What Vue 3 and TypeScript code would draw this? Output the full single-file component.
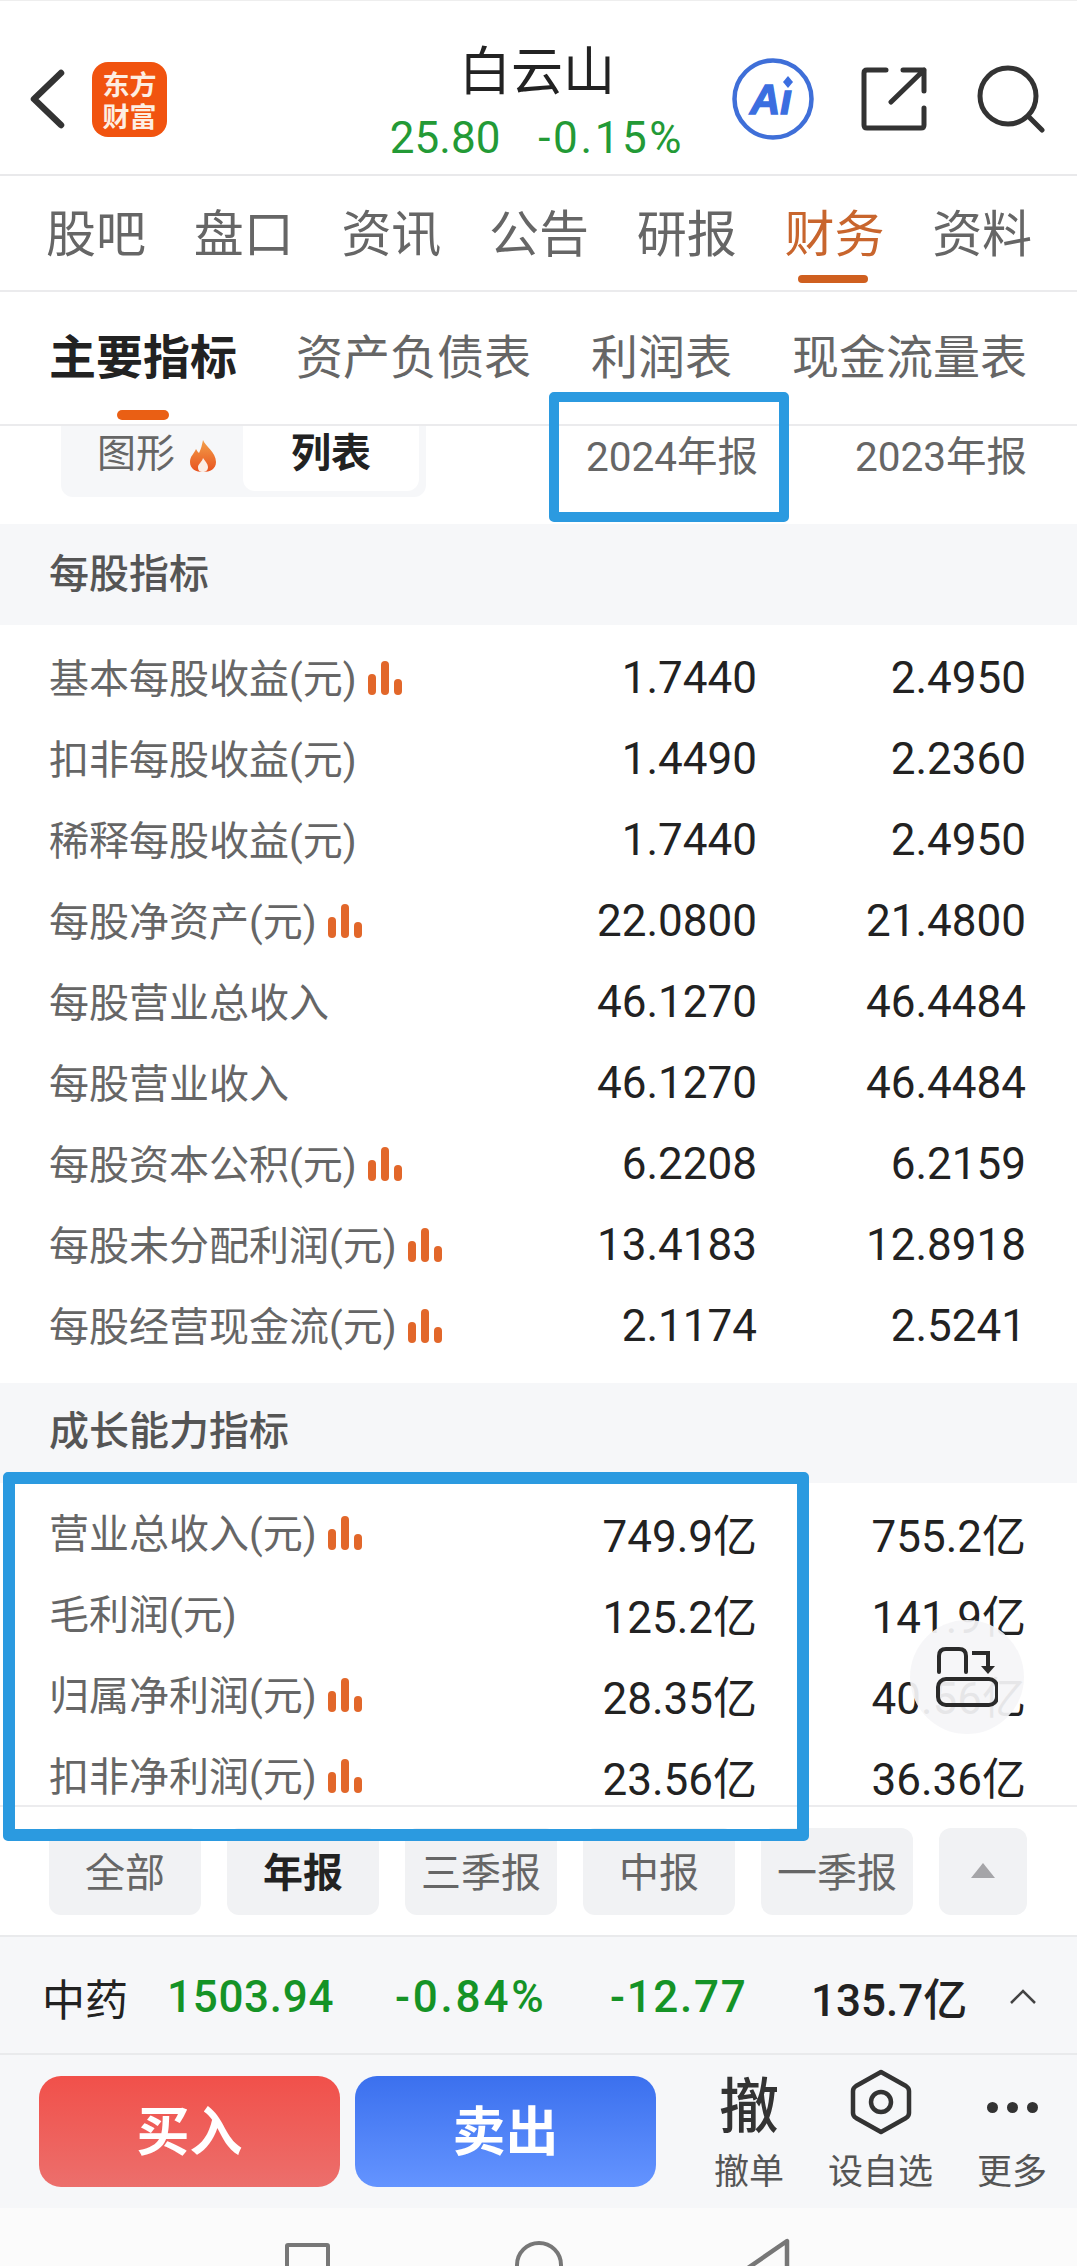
<script setup lang="ts">
const mainTabs = ['股吧', '盘口', '资讯', '公告', '研报', '财务', '资料'];
const subTabs = ['主要指标', '资产负债表', '利润表', '现金流量表'];
const filters = ['全部', '年报', '三季报', '中报', '一季报'];

interface Row {
  label: string;
  a: string;
  b: string;
  bars?: boolean;
}

const perShare: Row[] = [
  { label: '基本每股收益(元)', a: '1.7440', b: '2.4950', bars: true },
  { label: '扣非每股收益(元)', a: '1.4490', b: '2.2360' },
  { label: '稀释每股收益(元)', a: '1.7440', b: '2.4950' },
  { label: '每股净资产(元)', a: '22.0800', b: '21.4800', bars: true },
  { label: '每股营业总收入', a: '46.1270', b: '46.4484' },
  { label: '每股营业收入', a: '46.1270', b: '46.4484' },
  { label: '每股资本公积(元)', a: '6.2208', b: '6.2159', bars: true },
  { label: '每股未分配利润(元)', a: '13.4183', b: '12.8918', bars: true },
  { label: '每股经营现金流(元)', a: '2.1174', b: '2.5241', bars: true },
];

const growth: Row[] = [
  { label: '营业总收入(元)', a: '749.9亿', b: '755.2亿', bars: true },
  { label: '毛利润(元)', a: '125.2亿', b: '141.9亿' },
  { label: '归属净利润(元)', a: '28.35亿', b: '40.56亿', bars: true },
  { label: '扣非净利润(元)', a: '23.56亿', b: '36.36亿', bars: true },
];
</script>

<template>
  <div class="page">
    <header class="top">
      <svg class="back" width="36" height="60" viewBox="0 0 36 60">
        <path d="M32 4 L5 30 L32 56" fill="none" stroke="#333" stroke-width="6.5" stroke-linecap="round" stroke-linejoin="round" />
      </svg>
      <div class="logo"><div class="logo-text">东方财富</div></div>
      <div class="title">
        <div class="name">白云山</div>
        <div class="quote"><span>25.80</span><span class="pct">-0.15%</span></div>
      </div>
      <svg class="ai" width="84" height="84" viewBox="0 0 84 84">
        <circle cx="42" cy="42" r="38.5" fill="none" stroke="#3f6fd8" stroke-width="4.5" />
        <text x="19" y="57" class="ai-text">Aı</text>
        <path d="M57 19 L62 25 L57 31 L52 25 Z" fill="#3b6ee0" />
      </svg>
      <svg class="share" width="66" height="64" viewBox="0 0 66 64">
        <path d="M25 3 H6 Q3 3 3 6 V58 Q3 61 6 61 H60 Q63 61 63 58 V41" fill="none" stroke="#333" stroke-width="5" stroke-linecap="round" />
        <path d="M42 3 H63 V24 M63 3 L30 35" fill="none" stroke="#333" stroke-width="5" stroke-linecap="round" stroke-linejoin="round" />
      </svg>
      <svg class="search" width="68" height="68" viewBox="0 0 68 68">
        <circle cx="31" cy="31" r="28" fill="none" stroke="#333" stroke-width="5" />
        <path d="M51 51 L65 65" stroke="#333" stroke-width="5" stroke-linecap="round" />
      </svg>
    </header>

    <nav class="main-tabs">
      <div v-for="t in mainTabs" :key="t" class="main-tab" :class="{ on: t === '财务' }">{{ t }}</div>
    </nav>

    <nav class="sub-tabs">
      <div v-for="t in subTabs" :key="t" class="sub-tab" :class="{ on: t === '主要指标' }">{{ t }}</div>
    </nav>

    <div class="period">
      <div class="seg">
        <div class="seg-a">
          图形
          <svg width="30" height="34" viewBox="0 0 30 34">
            <defs>
              <linearGradient id="flame" x1="0" y1="0" x2="0" y2="1">
                <stop offset="0" stop-color="#f3a04a" />
                <stop offset="1" stop-color="#e8521f" />
              </linearGradient>
            </defs>
            <path d="M15 1 C17 7 28 13 28 23 C28 30 22 33 15 33 C8 33 2 30 2 23 C2 17 6 15 8 10 C9 12 10 13 11 14 C13 10 14 6 15 1 Z" fill="url(#flame)" />
            <path d="M15 19 C17 22 20 25 20 28 C20 32 17 33 15 33 C12 33 10 32 10 28 C10 25 14 23 15 19 Z" fill="#fbeee6" />
          </svg>
        </div>
        <div class="seg-b">列表</div>
      </div>
      <div class="cols">
        <span>2024年报</span>
        <span>2023年报</span>
      </div>
    </div>

    <div class="section-title">每股指标</div>
    <div class="rows">
      <div v-for="r in perShare" :key="r.label" class="row">
        <div class="label">
          <span class="label-text">{{ r.label }}</span>
          <svg v-if="r.bars" class="bars" width="36" height="34" viewBox="0 0 36 34">
            <rect x="1" y="13" width="8" height="21" rx="4" />
            <rect x="14" y="0" width="8" height="34" rx="4" />
            <rect x="27" y="18" width="8" height="16" rx="4" />
          </svg>
        </div>
        <div class="val a">{{ r.a }}</div>
        <div class="val b">{{ r.b }}</div>
      </div>
    </div>

    <div class="section-title second">成长能力指标</div>
    <div class="rows last">
      <div v-for="r in growth" :key="r.label" class="row">
        <div class="label">
          <span class="label-text">{{ r.label }}</span>
          <svg v-if="r.bars" class="bars" width="36" height="34" viewBox="0 0 36 34">
            <rect x="1" y="13" width="8" height="21" rx="4" />
            <rect x="14" y="0" width="8" height="34" rx="4" />
            <rect x="27" y="18" width="8" height="16" rx="4" />
          </svg>
        </div>
        <div class="val a">{{ r.a }}</div>
        <div class="val b">{{ r.b }}</div>
      </div>
    </div>

    <div class="filters">
      <div v-for="f in filters" :key="f" class="filter" :class="{ on: f === '年报' }">{{ f }}</div>
      <div class="filter arrow"><i></i></div>
    </div>

    <div class="market">
      <span class="m-name">中药</span>
      <span class="m-green m1">1503.94</span>
      <span class="m-green m2">-0.84%</span>
      <span class="m-green m3">-12.77</span>
      <span class="m-amount">135.7亿</span>
      <svg width="28" height="16" viewBox="0 0 28 16">
        <path d="M2 14 L14 2 L26 14" fill="none" stroke="#444" stroke-width="2.5" />
      </svg>
    </div>

    <div class="actions">
      <div class="btn buy">买入</div>
      <div class="btn sell">卖出</div>
      <div class="tool t1">
        <div class="cancel-glyph">撤</div>
        <span>撤单</span>
      </div>
      <div class="tool t2">
        <svg width="62" height="66" viewBox="0 0 62 66">
          <path d="M31 3 L56 17 Q59 19 59 22 V44 Q59 47 56 49 L31 63 L6 49 Q3 47 3 44 V22 Q3 19 6 17 Z" fill="none" stroke="#333" stroke-width="4.5" stroke-linejoin="round" />
          <circle cx="31" cy="33" r="10" fill="none" stroke="#333" stroke-width="4.5" />
        </svg>
        <span>设自选</span>
      </div>
      <div class="tool t3">
        <div class="dots"><i></i><i></i><i></i></div>
        <span>更多</span>
      </div>
    </div>

    <div class="sys-nav">
      <i class="sq"></i>
      <i class="ci"></i>
      <svg width="46" height="60" viewBox="0 0 46 60">
        <path d="M42 3 V56 L3 30 Z" fill="none" stroke="#777" stroke-width="4.5" stroke-linejoin="round" />
      </svg>
    </div>

    <div class="float-btn">
      <svg width="62" height="60" viewBox="0 0 62 60">
        <path d="M3 25 V9 Q3 2 10 2 H23 Q30 2 30 9 V25" fill="none" stroke="#2a2a2a" stroke-width="4" stroke-linecap="round" />
        <path d="M36 6 H52 V22" fill="none" stroke="#2a2a2a" stroke-width="4" />
        <path d="M45 19 H59 L52 27 Z" fill="#2a2a2a" />
        <rect x="2" y="32" width="59" height="26" rx="8" fill="none" stroke="#2a2a2a" stroke-width="4" />
      </svg>
    </div>

    <div class="mark mark-1"></div>
    <div class="mark mark-2"></div>
  </div>
</template>

<style scoped>
.page {
  position: relative;
  width: 1077px;
  height: 2266px;
  overflow: hidden;
  background: #fff;
  color: #222;
  font-family: Roboto, "Noto Sans CJK SC", sans-serif;
}

.top {
  height: 176px;
  box-sizing: border-box;
  border-top: 1px solid #eeeeee;
  border-bottom: 2px solid #e9e9eb;
  display: flex;
  align-items: flex-start;
  position: relative;
}
.back {
  margin: 68px 0 0 29px;
}
.logo {
  width: 75px;
  height: 75px;
  margin: 61px 0 0 27px;
  border-radius: 16px;
  background: #f1530f;
  display: flex;
  align-items: center;
  justify-content: center;
}
.logo-text {
  width: 56px;
  color: #fdeee2;
  font-size: 27px;
  line-height: 32px;
  font-weight: 700;
  text-align: center;
  font-family: "Noto Sans CJK SC", sans-serif;
}
.title {
  position: absolute;
  left: 337px;
  width: 400px;
  top: 39px;
  text-align: center;
}
.name {
  font-size: 52px;
  line-height: 66px;
  color: #222;
}
.quote {
  margin-top: 7px;
  font-size: 44px;
  line-height: 50px;
  color: #239a36;
  display: flex;
  justify-content: center;
  gap: 38px;
}
.pct {
  letter-spacing: 2.6px;
}
.ai {
  margin: 56px 0 0 564px;
}
.ai-text {
  font-family: "Liberation Sans", sans-serif;
  font-size: 42px;
  font-weight: 700;
  font-style: italic;
  fill: #3b6ee0;
  stroke: #3b6ee0;
  stroke-width: 1.4px;
}
.share {
  margin: 66px 0 0 46px;
}
.search {
  margin: 64px 0 0 50px;
}

.main-tabs {
  height: 116px;
  box-sizing: border-box;
  border-bottom: 2px solid #ebebed;
  padding-left: 46px;
  display: flex;
  gap: 47.7px;
}
.main-tab {
  position: relative;
  width: 100px;
  font-size: 50px;
  line-height: 118px;
  color: #666;
  white-space: nowrap;
}
.main-tab.on {
  color: #c8652d;
}
.main-tab.on::after {
  content: '';
  position: absolute;
  left: 14px;
  top: 99px;
  width: 70px;
  height: 8px;
  border-radius: 4px;
  background: #cf5f1f;
}

.sub-tabs {
  height: 134px;
  box-sizing: border-box;
  border-bottom: 2px solid #ebebed;
  padding-left: 49px;
  display: flex;
  gap: 60px;
}
.sub-tab {
  position: relative;
  font-size: 47px;
  line-height: 132px;
  color: #666;
  white-space: nowrap;
}
.sub-tab.on {
  color: #222;
  font-weight: 700;
  margin-right: -1px;
}
.sub-tab.on::after {
  content: '';
  position: absolute;
  left: 68px;
  top: 118px;
  width: 52px;
  height: 10px;
  border-radius: 5px;
  background: #ea5f14;
}

.period {
  height: 98px;
  position: relative;
  display: flex;
  overflow: hidden;
}
.seg {
  width: 365px;
  height: 82px;
  margin: -11px 0 0 61px;
  padding: 0 7px 6px 0;
  box-sizing: border-box;
  border-radius: 12px;
  background: #f6f7f9;
  display: flex;
}
.seg-a {
  width: 176px;
  padding: 3px 0 0 36px;
  box-sizing: border-box;
  font-size: 39px;
  line-height: 52px;
  color: #666;
  display: flex;
  align-items: center;
  gap: 13px;
  height: 75px;
}
.seg-a svg {
  margin-top: 3px;
}
.seg-b {
  width: 176px;
  margin-left: 6px;
  background: #fff;
  border-radius: 12px;
  text-align: center;
  font-size: 40px;
  font-weight: 700;
  padding-top: 11px;
  line-height: 56px;
  color: #222;
}
.cols {
  margin-left: auto;
  padding: 3px 50px 0 0;
  display: flex;
  gap: 97px;
  font-size: 40.5px;
  line-height: 56px;
  color: #666;
}

.section-title {
  height: 101px;
  background: #f6f7f9;
  padding-left: 49px;
  font-size: 40px;
  line-height: 102px;
  color: #555;
  font-weight: 500;
}
.section-title.second {
  height: 100px;
  line-height: 98px;
}
.rows {
  padding: 12px 0 17px;
}
.rows.last {
  padding: 9px 0 0;
  height: 324px;
  box-sizing: border-box;
  border-bottom: 2px solid #ececee;
}
.row {
  height: 81px;
  padding: 0 51px 0 49px;
  display: flex;
  align-items: center;
}
.label {
  flex: 1;
  font-size: 40px;
  color: #666;
  display: flex;
  align-items: center;
  white-space: nowrap;
}
.label-text {
  margin-top: -3px;
}
.bars {
  margin-left: 10px;
  fill: #e2672a;
}
.val {
  font-size: 44px;
  color: #222;
  text-align: right;
  white-space: nowrap;
}
.val.a {
  width: 270px;
}
.val.b {
  width: 269px;
}

.filters {
  height: 130px;
  box-sizing: border-box;
  border-bottom: 2px solid #e9eaec;
  padding: 21px 0 0 49px;
  display: flex;
  gap: 26px;
}
.filter {
  width: 152px;
  height: 87px;
  box-sizing: border-box;
  padding-bottom: 3px;
  border-radius: 12px;
  background: #f1f2f4;
  color: #666;
  font-size: 40px;
  display: flex;
  align-items: center;
  justify-content: center;
}
.filter.on {
  color: #222;
  font-weight: 700;
}
.filter.arrow {
  width: 88px;
}
.filter.arrow i {
  width: 0;
  height: 0;
  border-left: 12px solid transparent;
  border-right: 12px solid transparent;
  border-bottom: 15px solid #a5a5a8;
}

.market {
  height: 118px;
  box-sizing: border-box;
  background: #f6f7f9;
  border-bottom: 2px solid #e9eaec;
  padding: 4px 0 0 42px;
  display: flex;
  align-items: center;
  font-size: 44px;
  white-space: nowrap;
}
.m-name {
  width: 125px;
  font-size: 43px;
  color: #222;
}
.m-green {
  color: #159326;
  font-weight: 500;
}
.m1 {
  width: 228px;
  letter-spacing: 0.7px;
}
.m2 {
  width: 215px;
  letter-spacing: 2.8px;
}
.m3 {
  width: 201px;
  letter-spacing: 1.7px;
}
.m-amount {
  width: 198px;
  color: #222;
  font-weight: 500;
}

.actions {
  height: 153px;
  background: #f6f7f9;
  display: flex;
  position: relative;
}
.btn {
  width: 301px;
  height: 111px;
  margin-top: 21px;
  border-radius: 22px;
  color: #fff;
  font-size: 53px;
  font-weight: 700;
  text-align: center;
  line-height: 114px;
}
.buy {
  margin-left: 39px;
  background: linear-gradient(#f1504a, #ec6f6c);
}
.sell {
  margin-left: 15px;
  background: linear-gradient(#3b70ee, #6494ff);
}
.tool {
  position: absolute;
  top: 18px;
  display: flex;
  flex-direction: column;
  align-items: center;
  font-size: 35px;
  color: #555;
  white-space: nowrap;
}
.tool span {
  position: absolute;
  top: 80px;
  line-height: 40px;
}
.t1 {
  left: 714px;
  width: 70px;
}
.cancel-glyph {
  font-size: 60px;
  font-weight: 500;
  line-height: 70px;
  color: #333;
}
.t2 {
  left: 828px;
  width: 105px;
  top: 14px;
}
.t2 span {
  top: 84px;
}
.t3 {
  left: 977px;
  width: 70px;
  top: 47px;
}
.t3 span {
  top: 51px;
}
.dots {
  display: flex;
  gap: 9px;
}
.dots i {
  width: 11px;
  height: 11px;
  border-radius: 50%;
  background: #333;
}

.sys-nav {
  height: 58px;
  background: #fbfbfb;
  position: relative;
  overflow: hidden;
}
.sys-nav i,
.sys-nav svg {
  position: absolute;
}
.sq {
  left: 285px;
  top: 35px;
  width: 45px;
  height: 60px;
  box-sizing: border-box;
  border: 4px solid #777;
  border-radius: 3px;
}
.ci {
  left: 515px;
  top: 33px;
  width: 48px;
  height: 48px;
  box-sizing: border-box;
  border: 4px solid #777;
  border-radius: 50%;
}
.sys-nav svg {
  left: 745px;
  top: 30px;
}

.float-btn {
  position: absolute;
  left: 910px;
  top: 1620px;
  width: 114px;
  height: 114px;
  border-radius: 50%;
  background: rgba(245, 245, 247, 0.93);
  display: flex;
  align-items: center;
  justify-content: center;
}

.mark {
  position: absolute;
  box-sizing: border-box;
  border-style: solid;
  border-color: #2b9ae0;
  border-radius: 5px;
}
.mark-1 {
  left: 549px;
  top: 392px;
  width: 240px;
  height: 130px;
  border-width: 10px;
}
.mark-2 {
  left: 3px;
  top: 1472px;
  width: 806px;
  height: 369px;
  border-width: 12px;
}
</style>

<style>
html,
body {
  background: #fff;
}
</style>
